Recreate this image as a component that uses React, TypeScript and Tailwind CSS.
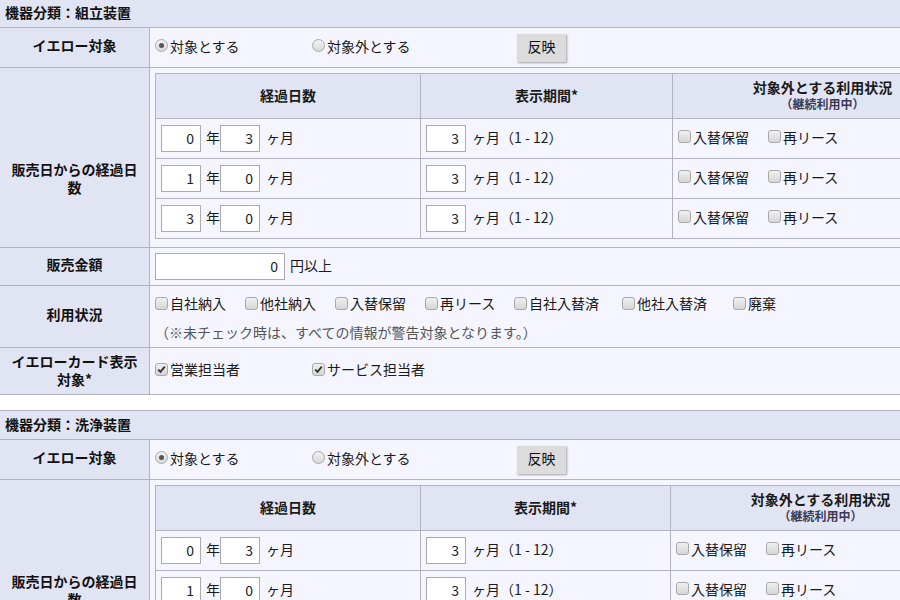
import React from 'react'

const font = { fontFamily: '"Noto Sans CJK JP", "Noto Sans", sans-serif' }

// Noto CJK sits a little low in its line box; bottom padding nudges text up
function T({ children, className = '' }: { children: React.ReactNode; className?: string }) {
  return <span className={'pb-[4px] ' + className}>{children}</span>
}

function Radio({ checked, label, className = '' }: { checked?: boolean; label: string; className?: string }) {
  return (
    <span className={'inline-flex items-center gap-[2px] pb-[4px] ' + className}>
      <span className="w-[13px] h-[13px] rounded-full border border-[#a9a9a9] bg-gradient-to-b from-[#f2f2f2] to-[#d9d9d9] flex items-center justify-center">
        {checked && <span className="w-[5px] h-[5px] rounded-full bg-[#555]" />}
      </span>
      <span>{label}</span>
    </span>
  )
}

function Check({ checked, label, className = '' }: { checked?: boolean; label: string; className?: string }) {
  return (
    <span className={'inline-flex items-center gap-[2px] shrink-0 pb-[4px] ' + className}>
      <span className="w-[13px] h-[13px] rounded-[3px] border border-[#a9a9a9] bg-gradient-to-b from-[#f0f0f0] to-[#d6d6d6] flex items-center justify-center">
        {checked && (
          <svg width="9" height="9" viewBox="0 0 9 9">
            <path d="M1.2 4.6 L3.5 6.9 L7.8 1.6" fill="none" stroke="#333" strokeWidth="1.8" />
          </svg>
        )}
      </span>
      <span>{label}</span>
    </span>
  )
}

function NumBox({ value, w = 'w-[40px]' }: { value: string; w?: string }) {
  return (
    <input
      readOnly
      value={value}
      className={w + ' h-[27px] border border-[#ababab] bg-white text-right pr-[6px] pb-[2px] text-[14px] text-[#222] outline-none'}
      style={font}
    />
  )
}

function Row({
  label,
  h,
  children,
  className = '',
  labelPad = 'pb-[5px]',
}: {
  label: React.ReactNode
  h: string
  children: React.ReactNode
  className?: string
  labelPad?: string
}) {
  return (
    <div className={'flex border-b border-[#b2b2c2] ' + h}>
      <div className={'w-[150px] shrink-0 bg-[#e1e5f3] border-r border-[#b2b2c2] flex items-center justify-center text-center font-bold px-[8px] leading-[18px] text-[#111] ' + labelPad}>
        {label}
      </div>
      <div className={'flex-1 min-w-0 bg-[#f4f5fe] ' + className}>{children}</div>
    </div>
  )
}

const periods = [
  ['0', '3'],
  ['1', '0'],
  ['3', '0'],
]

function PeriodTable({ col2 }: { col2: string }) {
  return (
    <div className="w-max border-l border-t border-[#b2b2c2]">
      <div className="flex">
        <div className="w-[265px] h-[45px] pb-[3px] border-r border-b border-[#b2b2c2] bg-[#e1e5f3] flex items-center justify-center font-bold">経過日数</div>
        <div className={col2 + ' h-[45px] pb-[3px] border-r border-b border-[#b2b2c2] bg-[#e1e5f3] flex items-center justify-center font-bold'}>表示期間*</div>
        <div className="w-[300px] h-[45px] pb-[3px] border-r border-b border-[#b2b2c2] bg-[#e1e5f3] flex flex-col items-center justify-center font-bold">
          <span className="leading-[16px]">対象外とする利用状況</span>
          <span className="leading-[15px] mt-[1px] text-[12px] text-[#3b3b55]">（継続利用中）</span>
        </div>
      </div>
      {periods.map(([y, m], i) => (
        <div key={i} className="flex">
          <div className="w-[265px] h-[40px] border-r border-b border-[#b2b2c2] flex items-center pl-[5px]">
            <NumBox value={y} />
            <T className="ml-[5px]">年</T>
            <NumBox value={m} />
            <T className="ml-[6px]">ヶ月</T>
          </div>
          <div className={col2 + ' h-[40px] border-r border-b border-[#b2b2c2] flex items-center pl-[5px]'}>
            <NumBox value="3" />
            <T className="ml-[6px]">ヶ月（1 - 12）</T>
          </div>
          <div className="w-[300px] h-[40px] border-r border-b border-[#b2b2c2] flex items-center pl-[5px]">
            <Check label="入替保留" className="w-[90px]" />
            <Check label="再リース" />
          </div>
        </div>
      ))}
    </div>
  )
}

function Section({ title, col2, first }: { title: string; col2: string; first?: boolean }) {
  return (
    <div className={first ? '' : 'mt-[15px]'}>
      <div className="h-[30px] border-t border-b border-[#b2b2c2] bg-[#e1e5f3] flex items-center pl-[5px] pb-[3px] font-bold text-[#111]">
        {title}
      </div>
      <Row label="イエロー対象" h="h-[40px]" className="flex items-center pl-[5px]">
        <Radio checked label="対象とする" className="w-[157px]" />
        <Radio label="対象外とする" className="w-[205px]" />
        <button className="w-[49px] h-[28px] pb-[3px] bg-[#dcdcdc] shadow-[1px_1px_2px_rgba(0,0,0,0.35)] text-[14px] text-[#111]" style={font}>
          反映
        </button>
      </Row>
      <Row label="販売日からの経過日数" h="h-[180px]" labelPad="pt-[40px]" className="pt-[5px] pl-[5px]">
        <PeriodTable col2={col2} />
      </Row>
      <Row label="販売金額" h="h-[38px]" className="flex items-center pl-[5px]">
        <NumBox value="0" w="w-[130px]" />
        <T className="ml-[5px]">円以上</T>
      </Row>
      <Row label="利用状況" h="h-[62px]" className="flex flex-col pl-[5px] pt-[9px] gap-[7px]">
        <div className="h-[20px] flex items-center">
          <Check label="自社納入" className="w-[90px]" />
          <Check label="他社納入" className="w-[90px]" />
          <Check label="入替保留" className="w-[90px]" />
          <Check label="再リース" className="w-[89px]" />
          <Check label="自社入替済" className="w-[108px]" />
          <Check label="他社入替済" className="w-[111px]" />
          <Check label="廃棄" />
        </div>
        <div className="h-[20px] flex items-center text-[#555]">（※未チェック時は、すべての情報が警告対象となります。）</div>
      </Row>
      <Row label="イエローカード表示対象*" h="h-[47px]" labelPad="pb-[2px]" className="flex items-center pl-[5px]">
        <Check checked label="営業担当者" className="w-[157px]" />
        <Check checked label="サービス担当者" />
      </Row>
    </div>
  )
}

export default function App() {
  return (
    <div className="w-[900px] h-[600px] overflow-hidden bg-white text-[14px] text-[#1a1a1a] leading-[20px]" style={font}>
      <div className="-mt-[2px]">
        <Section first title="機器分類：組立装置" col2="w-[252px]" />
        <Section title="機器分類：洗浄装置" col2="w-[250px]" />
      </div>
    </div>
  )
}
